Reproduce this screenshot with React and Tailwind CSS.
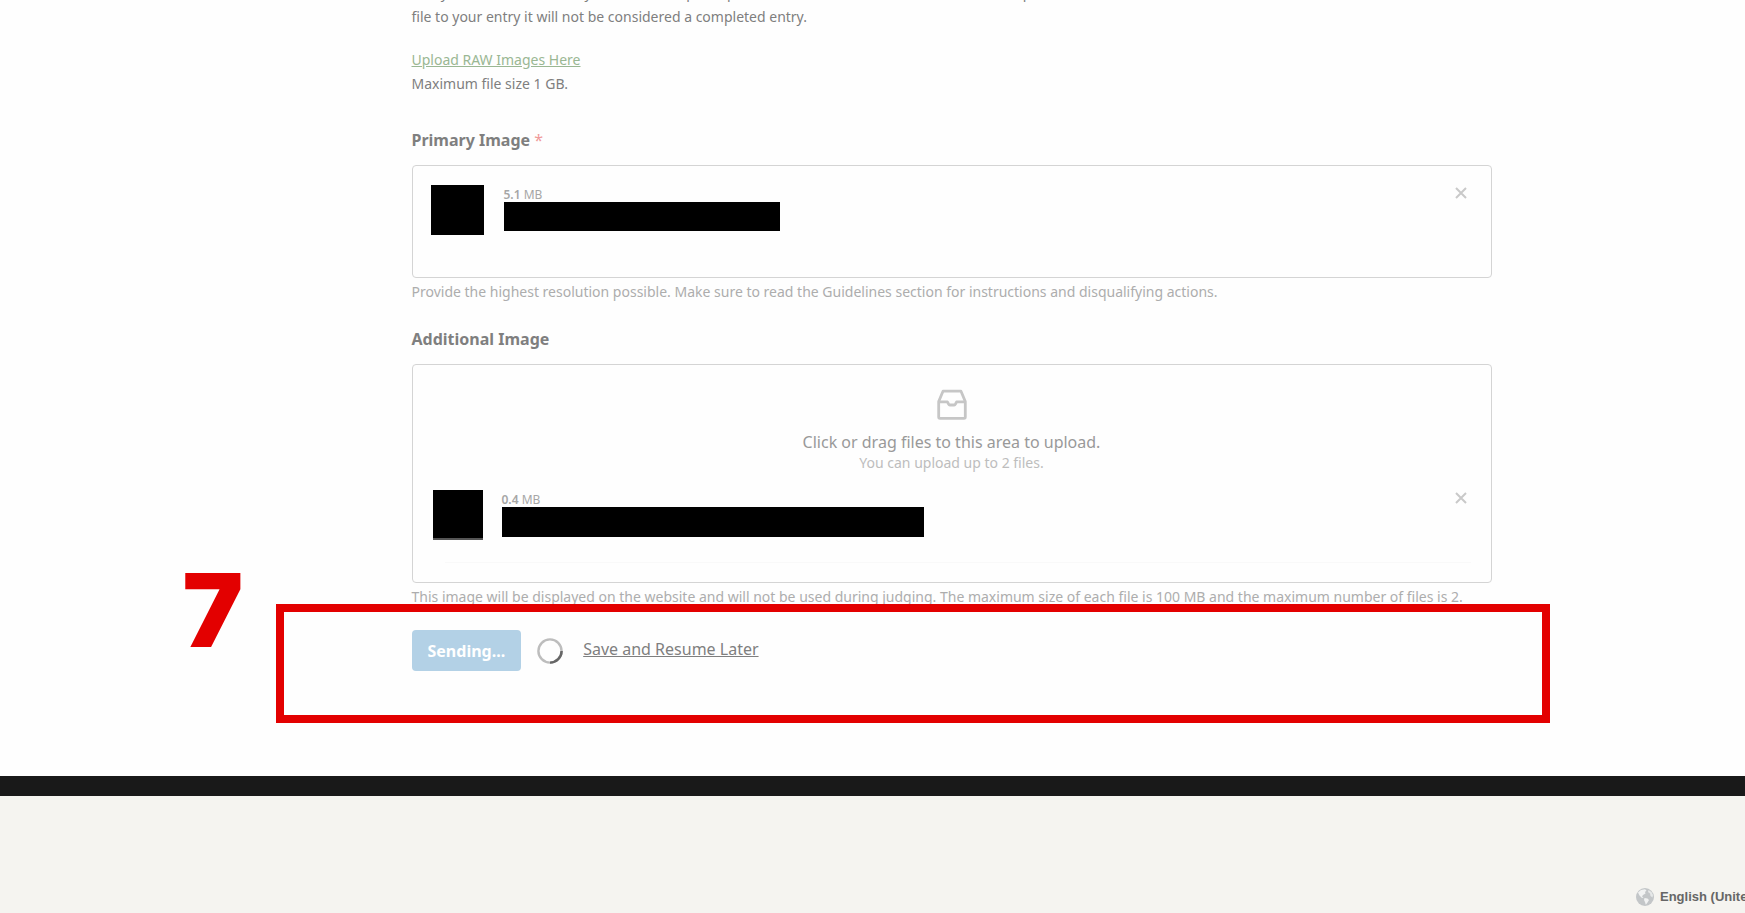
const SANS = "font-['Noto_Sans',sans-serif]";

function Redacted({ className }) {
  return <div className={`bg-black ${className}`} />;
}

function RemoveButton({ label }) {
  return (
    <button type="button" aria-label={label} className="mt-0.5 text-[#c9c9c9]">
      <svg width="12" height="12" viewBox="0 0 12 12" fill="none" stroke="currentColor" strokeWidth="2">
        <path d="M1 1 L11 11 M11 1 L1 11" />
      </svg>
    </button>
  );
}

function FileSize({ value }) {
  return (
    <p className="pt-0.5 text-xs leading-[15px] text-[#a6a6a6]">
      <strong className="font-semibold">{value}</strong> MB
    </p>
  );
}

function InboxIcon() {
  return (
    <svg width="30" height="31" viewBox="0 0 30 31" fill="none" stroke="#c6c6c6" strokeWidth="2.8" strokeLinejoin="round">
      <path d="M1.7 12.5 L6 2.2 H24 L28.3 12.5 V28 Q28.3 29.3 27 29.3 H3 Q1.7 29.3 1.7 28 Z" />
      <path d="M1.7 12.8 H10.4 L11.6 15.2 Q12 16 12.8 16 H17.2 Q18 16 18.4 15.2 L19.6 12.8 H28.3" />
    </svg>
  );
}

function Spinner() {
  return (
    <svg width="26" height="26" viewBox="0 0 26 26" fill="none" strokeWidth="2.4" role="img" aria-label="Loading">
      <circle cx="13" cy="13" r="11.6" stroke="#bdbdbd" />
      <path d="M24.6 13 A11.6 11.6 0 0 1 13 24.6" stroke="#666666" />
    </svg>
  );
}

function GlobeIcon() {
  return (
    <svg width="18" height="18" viewBox="0 0 18 18" aria-hidden="true" className="shrink-0">
      <circle cx="9" cy="9" r="9" fill="#c3c6c8" />
      <path d="M2 4.5 L5 2 L9 1.2 L10.5 2.5 L9 4 L9.5 5.5 L7 7 L6 8.5 L7.5 9.5 L6 10 L3.5 7.5 Z" fill="#f1f2f2" />
      <path d="M8.5 10 L11.5 10.5 L13 12 L11.5 14.5 L9.8 16.8 L9 14 L8 12 Z" fill="#f1f2f2" />
      <path d="M12.5 2 L15.5 4 L17 7 L16.5 9.5 L14.5 8 L14 5.5 L12 4 Z" fill="#e6e8e8" />
    </svg>
  );
}

function StepMarker({ number }) {
  return (
    <>
      <div className="pointer-events-none absolute -top-[26px] -right-[58px] -bottom-[52px] -left-[136px] border-8 border-[#e30000]" />
      <span className="absolute -top-[84px] -left-[229px] font-['Inter',sans-serif] text-[102px] leading-[128px] font-black text-[#e30000]">
        {number}
      </span>
    </>
  );
}

export default function App() {
  return (
    <div className={`overflow-hidden bg-[#fefefe] ${SANS} text-[#7f7f7f]`}>
      <div className="pl-[158px]">
        <main className="mx-auto -mt-[19px] w-full max-w-[1080px]">
          <div className="text-sm leading-6">
            <p>
              Many of the finalists need <span className="underline">you to send it up</span> to a panel for review. Unless the files are in a complete
              <br />
              file to your entry it will not be considered a completed entry.
            </p>
            <p className="mt-[19px]">
              <a href="#upload" className="text-[#9ab793] underline">Upload RAW Images Here</a>
              <br />
              Maximum file size 1 GB.
            </p>
          </div>

          <section className="mt-8">
            <h2 className="text-base leading-6 font-bold">
              Primary Image <span className="font-normal text-[#f09a9a]">*</span>
            </h2>
            <div className="mt-[13px] flex items-start rounded-sm border border-[#d4d4d4] pt-[19px] pr-6 pb-[42px] pl-[18px]">
              <Redacted className="h-[50px] w-[53px]" />
              <div className="ml-5 flex-1">
                <FileSize value="5.1" />
                <Redacted className="h-[29px] w-[276px]" />
              </div>
              <RemoveButton label="Remove primary image" />
            </div>
            <p className="mt-1 text-sm leading-5 text-[#adadad]">
              Provide the highest resolution possible. Make sure to read the Guidelines section for instructions and disqualifying actions.
            </p>
          </section>

          <section className="mt-[25px]">
            <h2 className="text-base leading-6 font-bold">Additional Image</h2>
            <div className="mt-[13px] rounded-sm border border-[#d4d4d4] pt-6 pb-[19px]">
              <div className="flex flex-col items-center">
                <InboxIcon />
                <p className="mt-3 text-base leading-5 text-[#999999]">Click or drag files to this area to upload.</p>
                <p className="mt-px text-sm leading-5 text-[#bdbdbd]">You can upload up to 2 files.</p>
              </div>
              <div className="mt-[17px] flex items-start pr-6 pl-5">
                <Redacted className="h-[50px] w-[50px] border-b-2 border-[#555555]" />
                <div className="ml-[19px] flex-1">
                  <FileSize value="0.4" />
                  <Redacted className="h-[30px] w-[422px]" />
                </div>
                <RemoveButton label="Remove additional image" />
              </div>
              <div className="mt-[22px] mr-5 ml-8 h-px bg-[#f9f9f9]" />
            </div>
            <p className="mt-1 text-sm leading-5 text-[#adadad]">
              This image will be displayed on the website and will not be used during judging. The maximum size of each file is 100 MB and the maximum number of files is 2.
            </p>
          </section>

          <div className="relative mt-[23px] flex items-center">
            <button type="button" className="h-[41px] rounded-sm bg-[#b3d1e6] px-4 text-base font-bold text-white">
              Sending...
            </button>
            <div className="ml-4"><Spinner /></div>
            <a href="#save" className="ml-5 pb-1 text-base underline">Save and Resume Later</a>
            <StepMarker number="7" />
          </div>
        </main>
      </div>
      <div className="mt-[105px] h-5 bg-[#191919]" />
      <footer className="bg-[#f5f4f0] pt-[92px] pb-2">
        <a
          href="#language"
          className="ml-auto flex w-[109px] items-center gap-[6px] font-['Liberation_Sans',sans-serif] text-[13px] leading-[18px] font-bold whitespace-nowrap text-[#666666]"
        >
          <GlobeIcon />
          English (United States)
        </a>
      </footer>
    </div>
  );
}
